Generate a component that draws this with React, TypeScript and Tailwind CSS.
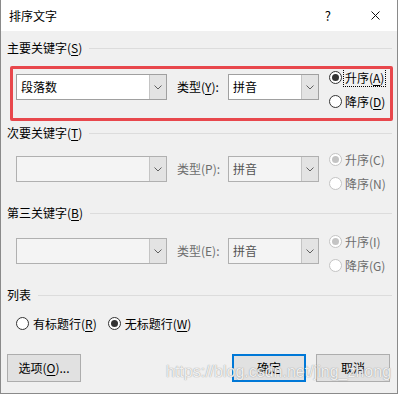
import React from "react"

const font = { fontFamily: '"Noto Sans CJK SC", "Noto Sans", sans-serif' }

function Key({ k, on = true }: { k: string; on?: boolean }) {
  return <span className={on ? "underline underline-offset-2" : ""}>{k}</span>
}

function Heading({ children, lineFrom }: { children: React.ReactNode; lineFrom: string }) {
  return (
    <div className="flex items-center h-[16px] pl-[6px] pr-[5px]">
      <span className="whitespace-nowrap leading-[16px]">{children}</span>
      <div className={"flex-1 h-px bg-[#dcdcdc] " + lineFrom}></div>
    </div>
  )
}

function Chevron({ color = "#606060" }: { color?: string }) {
  return (
    <svg width="8" height="5" viewBox="0 0 8 5">
      <path d="M0.5 0.5 L4 4 L7.5 0.5" fill="none" stroke={color} strokeWidth="1" />
    </svg>
  )
}

function Combo({ width, value, enabled }: { width: string; value?: string; enabled: boolean }) {
  return (
    <div
      className={
        "flex h-[26px] border " +
        width +
        (enabled ? " border-[#a0a0a0] bg-white" : " border-[#b0b0b0] bg-[#f4f4f4]")
      }>
      <div
        className={
          "flex-1 flex items-center pl-[4px] leading-none " +
          (enabled ? "text-black" : "text-[#555]")
        }>
        {value}
      </div>
      <div className="w-[17px] flex items-center justify-center bg-[#e3e3e3] border-l border-[#c4c4c4]">
        <Chevron />
      </div>
    </div>
  )
}

function Radio({
  checked,
  enabled = true,
  children,
  focus = false
}: {
  checked: boolean
  enabled?: boolean
  children: React.ReactNode
  focus?: boolean
}) {
  return (
    <div className="flex items-center h-[20px]">
      <div
        className={
          "w-[13px] h-[13px] rounded-full border bg-white flex items-center justify-center " +
          (enabled ? "border-[#333]" : "border-[#c4c4c4]")
        }>
        {checked && (
          <div
            className={
              "w-[7px] h-[7px] rounded-full " + (enabled ? "bg-[#333]" : "bg-[#c4c4c4]")
            }></div>
        )}
      </div>
      <span
        className={
          "ml-[2px] px-[1px] leading-[17px] whitespace-nowrap " +
          (enabled ? "text-black" : "text-[#6d6d6d]") +
          (focus ? " outline-1 outline-dotted outline-black" : "")
        }>
        {children}
      </span>
    </div>
  )
}

function KeyRow({
  value,
  typeLabel,
  asc,
  desc,
  enabled,
  focus
}: {
  value?: string
  typeLabel: React.ReactNode
  asc: React.ReactNode
  desc: React.ReactNode
  enabled: boolean
  focus?: boolean
}) {
  return (
    <div className="flex items-start pl-[15px]">
      <div className="mt-[7px]">
        <Combo width="w-[151px]" value={value} enabled={enabled} />
      </div>
      <div
        className={
          "mt-[7px] h-[26px] w-[51px] ml-[10px] flex items-center whitespace-nowrap " +
          (enabled ? "text-black" : "text-[#6d6d6d]")
        }>
        {typeLabel}
      </div>
      <div className="mt-[7px]">
        <Combo width="w-[91px]" value="拼音" enabled={enabled} />
      </div>
      <div className="ml-[10px] flex flex-col gap-[4px]">
        <Radio checked={true} enabled={enabled} focus={focus}>
          {asc}
        </Radio>
        <Radio checked={false} enabled={enabled}>
          {desc}
        </Radio>
      </div>
    </div>
  )
}

function Button({ children, primary = false }: { children: React.ReactNode; primary?: boolean }) {
  return (
    <div
      className={
        "w-[74px] h-[28px] flex items-center justify-center bg-[#e1e1e1] " +
        (primary ? "border-2 border-[#0078d7]" : "border border-[#adadad]")
      }>
      {children}
    </div>
  )
}

export default function App() {
  return (
    <div
      className="relative w-[398px] h-[394px] bg-[#f0f0f0] border-l border-r border-b border-[#8a8a8a] text-[12px] text-black overflow-hidden"
      style={font}>
      {/* title bar */}
      <div className="h-[31px] bg-white flex items-center pl-[8px]">
        <span className="leading-none">排序文字</span>
        <span className="ml-auto text-[13px] leading-none">?</span>
        <svg className="ml-[40px] mr-[17px]" width="9" height="9" viewBox="0 0 9 9">
          <path d="M0.5 0.5 L8.5 8.5 M8.5 0.5 L0.5 8.5" stroke="#111" strokeWidth="1" />
        </svg>
      </div>

      <div className="mt-[9px]">
        <Heading lineFrom="ml-[7px]">
          主要关键字(<Key k="S" />)
        </Heading>
      </div>
      <div className="mt-[11px]">
        <KeyRow
          value="段落数"
          typeLabel={
            <>
              类型(<Key k="Y" />
              ):
            </>
          }
          asc={
            <>
              升序(<Key k="A" />)
            </>
          }
          desc={
            <>
              降序(<Key k="D" />)
            </>
          }
          enabled={true}
          focus={true}
        />
      </div>

      <div className="mt-[14px]">
        <Heading lineFrom="ml-[7px]">
          次要关键字(<Key k="T" />)
        </Heading>
      </div>
      <div className="mt-[8px]">
        <KeyRow
          typeLabel="类型(P):"
          asc="升序(C)"
          desc="降序(N)"
          enabled={false}
        />
      </div>

      <div className="mt-[12px]">
        <Heading lineFrom="ml-[7px]">
          第三关键字(<Key k="B" />)
        </Heading>
      </div>
      <div className="mt-[10px]">
        <KeyRow
          typeLabel="类型(E):"
          asc="升序(I)"
          desc="降序(G)"
          enabled={false}
        />
      </div>

      <div className="mt-[12px]">
        <Heading lineFrom="ml-[7px]">列表</Heading>
      </div>
      <div className="mt-[10px] flex pl-[15px] gap-[10px]">
        <Radio checked={false}>
          <span className="ml-[1px]">
            有标题行(<Key k="R" />)
          </span>
        </Radio>
        <Radio checked={true}>
          <span className="ml-[1px]">
            无标题行(<Key k="W" />)
          </span>
        </Radio>
      </div>

      <div className="mt-[21px] flex pl-[6px] pr-[7px]">
        <Button>
          选项(<Key k="O" />
          )...
        </Button>
        <div className="ml-auto flex gap-[10px]">
          <Button primary>确定</Button>
          <Button>取消</Button>
        </div>
      </div>

      {/* red annotation box */}
      <div className="absolute left-[9px] top-[66px] w-[383px] h-[55px] border-[3px] border-[#e8474c] rounded-[2px] pointer-events-none"></div>

      {/* watermark */}
      <div
        className="absolute left-[165px] top-[362px] text-[16px] leading-[20px] text-white/85 whitespace-nowrap pointer-events-none"
        style={{
          fontFamily: '"Liberation Sans", Arial, sans-serif',
          textShadow: "0 0 1px rgba(110,110,110,0.6), 0 0 1px rgba(110,110,110,0.4)"
        }}>
        https://blog.csdn.net/jing_zhong
      </div>
    </div>
  )
}
